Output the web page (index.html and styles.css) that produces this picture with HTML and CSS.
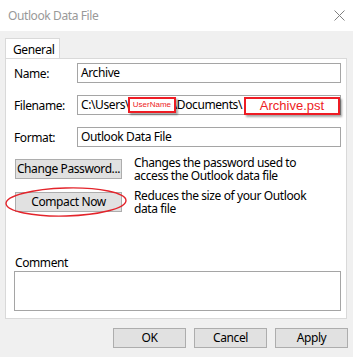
FILE: index.html
```html
<!DOCTYPE html>
<html lang="en">
<head>
  <meta charset="UTF-8" />
  <title>Outlook Data File</title>
  <link rel="stylesheet" href="styles.css">
</head>
<body>
  <div class="titlebar">
    <span class="title">Outlook Data File</span>
    <svg class="close" width="11" height="11" viewBox="0 0 11 11">
      <path d="M0.5 0.5 L10.5 10.5 M10.5 0.5 L0.5 10.5" stroke="#808080" stroke-width="1" fill="none" />
    </svg>
  </div>

  <div class="dialog">
    <div class="tabs">
      <div class="tab">General</div>
    </div>

    <div class="panel">
      <div class="field-row">
        <label class="field-label">Name:</label>
        <div class="field">Archive</div>
      </div>

      <div class="field-row">
        <label class="field-label">Filename:</label>
        <div class="field">
          <span>C:\Users\</span><span class="tag tag-user">UserName</span><span class="after-user">\Documents\</span><span class="tag tag-file">Archive.pst</span>
        </div>
      </div>

      <div class="field-row">
        <label class="field-label">Format:</label>
        <div class="field">Outlook Data File</div>
      </div>

      <div class="action-row">
        <button class="btn btn-action">Change Password...</button>
        <p class="action-desc">Changes the password used to<br>access the Outlook data file</p>
      </div>

      <div class="action-row action-compact">
        <div class="circled">
          <button class="btn btn-action">Compact Now</button>
          <svg class="ring" width="125" height="32" viewBox="0 0 125 32">
            <ellipse cx="62" cy="16" rx="60" ry="14" transform="rotate(-1.5 62 16)" stroke="#e3242b" stroke-width="1.4" fill="none" />
          </svg>
        </div>
        <p class="action-desc">Reduces the size of your Outlook<br>data file</p>
      </div>

      <div class="comment-label">Comment</div>
      <div class="comment-box"></div>
    </div>

    <div class="footer">
      <button class="btn btn-footer">OK</button>
      <button class="btn btn-footer">Cancel</button>
      <button class="btn btn-footer">Apply</button>
    </div>
  </div>
</body>
</html>
```

FILE: styles.css
```css
body {
  margin: 0;
  width: 353px;
  height: 357px;
  background: #f0f0f0;
  font-family: 'Noto Sans', sans-serif;
  font-size: 12px;
  letter-spacing: -0.4px;
  color: #000;
  overflow: hidden;
}

.titlebar {
  height: 31px;
  background: #fff;
  display: flex;
  align-items: center;
  justify-content: space-between;
  padding: 0 8px 0 8px;
}

.title {
  color: #999;
  font-size: 12px;
}

.close {
  display: block;
}

.dialog {
  padding: 7px 5px 0 5px;
}

.tabs {
  display: flex;
  height: 20px;
}

.tab {
  width: 55px;
  height: 20px;
  background: #fff;
  border: 1px solid #d9d9d9;
  border-bottom: none;
  padding-left: 7px;
  box-sizing: border-box;
  line-height: 22px;
  position: relative;
  z-index: 1;
  margin-bottom: -1px;
}

.panel {
  width: 342px;
  height: 261px;
  box-sizing: border-box;
  background: #fff;
  border: 1px solid #d9d9d9;
  padding: 4px 0 0 8px;
}

.field-row {
  display: flex;
  align-items: center;
  height: 20px;
  margin-bottom: 12px;
}

.field-label {
  width: 63px;
}

.field {
  width: 264px;
  height: 20px;
  box-sizing: border-box;
  border: 1px solid #a5a5a5;
  padding-left: 3px;
  display: flex;
  align-items: center;
  white-space: nowrap;
  line-height: 18px;
}

.tag {
  background: #fff;
  border: 2px solid #ee1c24;
  color: #ee1c24;
  box-sizing: border-box;
  font-family: 'Liberation Sans', sans-serif;
  letter-spacing: 0;
  text-align: center;
  box-shadow: 2px 2px 2px rgba(0, 0, 0, 0.35);
  position: relative;
}

.tag-user {
  width: 50px;
  height: 16px;
  font-size: 8px;
  line-height: 12px;
  margin-left: -1px;
}

.after-user {
  margin-left: -3px;
}

.tag-file {
  width: 101px;
  height: 18px;
  font-size: 13px;
  line-height: 14px;
  margin-left: 2px;
  margin-top: 2px;
}

.action-row {
  display: flex;
  align-items: flex-start;
  margin-left: 1px;
}

.action-compact {
  margin-top: 10px;
}

.btn {
  font-family: 'Noto Sans', sans-serif;
  font-size: 12px;
  letter-spacing: -0.4px;
  color: #000;
  background: #e1e1e1;
  border: 1px solid #adadad;
  padding: 0;
  height: 20px;
  line-height: 18px;
  white-space: nowrap;
}

.btn-action {
  width: 107px;
  display: block;
}

.circled {
  position: relative;
}

.ring {
  position: absolute;
  left: -11px;
  top: -6px;
  pointer-events: none;
}

.action-desc {
  margin: -3px 0 0 12px;
  line-height: 13px;
}

.comment-label {
  margin-top: 40px;
  line-height: 16px;
  padding-left: 1px;
}

.comment-box {
  width: 327px;
  height: 40px;
  box-sizing: border-box;
  border: 1px solid #a5a5a5;
}

.footer {
  display: flex;
  justify-content: flex-end;
  gap: 8px;
  margin-top: 9px;
}

.btn-footer {
  width: 73px;
}
```
